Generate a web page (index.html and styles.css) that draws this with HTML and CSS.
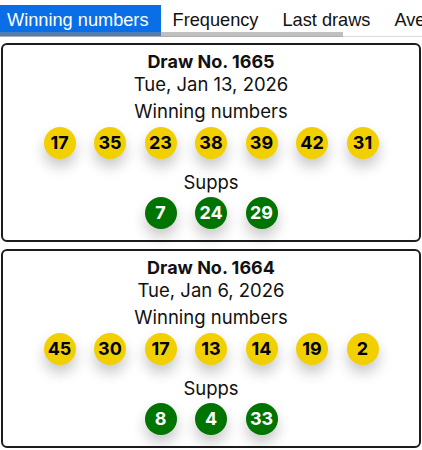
FILE: index.html
```html
<!DOCTYPE html>
<html lang="en">
<head>
  <meta charset="UTF-8" />
  <meta name="viewport" content="width=device-width, initial-scale=1.0"/>
  <title>Results</title>
  <link rel="stylesheet" href="styles.css">
</head>
<body>
  <nav class="tabs">
    <div class="tab active">Winning numbers</div>
    <div class="tab">Frequency</div>
    <div class="tab">Last draws</div>
    <div class="tab">Averages</div>
    <div class="scroll-track"><div class="scroll-thumb"></div></div>
  </nav>

  <div class="draw-card">
    <div class="draw-no">Draw No. 1665</div>
    <div class="draw-date">Tue, Jan 13, 2026</div>
    <div class="group-title">Winning numbers</div>
    <div class="balls">
      <span class="ball">17</span>
      <span class="ball">35</span>
      <span class="ball">23</span>
      <span class="ball">38</span>
      <span class="ball">39</span>
      <span class="ball">42</span>
      <span class="ball">31</span>
    </div>
    <div class="group-title">Supps</div>
    <div class="balls">
      <span class="ball supp">7</span>
      <span class="ball supp">24</span>
      <span class="ball supp">29</span>
    </div>
  </div>

  <div class="draw-card">
    <div class="draw-no">Draw No. 1664</div>
    <div class="draw-date">Tue, Jan 6, 2026</div>
    <div class="group-title">Winning numbers</div>
    <div class="balls">
      <span class="ball">45</span>
      <span class="ball">30</span>
      <span class="ball">17</span>
      <span class="ball">13</span>
      <span class="ball">14</span>
      <span class="ball">19</span>
      <span class="ball">2</span>
    </div>
    <div class="group-title">Supps</div>
    <div class="balls">
      <span class="ball supp">8</span>
      <span class="ball supp">4</span>
      <span class="ball supp">33</span>
    </div>
  </div>
</body>
</html>
```

FILE: styles.css
```css
body {
  margin: 0;
  font-family: Inter, "Noto Sans", sans-serif;
  color: #111;
  background: #fff;
  overflow: hidden;
}

.tabs {
  position: relative;
  display: flex;
  padding-top: 5px;
  height: 32px;
  white-space: nowrap;
  overflow: hidden;
  font-family: "Liberation Sans", Arial, sans-serif;
  font-size: 18.2px;
}

.tab {
  padding: 0 12px;
  line-height: 31px;
  color: #111;
}

.tab.active {
  padding-left: 7px;
  background: #0a6ee6;
  color: #fff;
}

/* fake horizontal scrollbar under the tab strip */
.scroll-track {
  position: absolute;
  left: 0;
  right: 0;
  bottom: 0;
  height: 5px;
  border-bottom: 1px solid #dcdcdc;
  box-sizing: border-box;
}

.scroll-thumb {
  width: 343px;
  height: 5px;
  background: rgba(140, 140, 140, 0.55);
}

.draw-card {
  margin: 6px 1px 0;
  border: 2px solid #1c1c1c;
  border-radius: 6px;
  padding: 7px 0 11px;
  text-align: center;
}

.draw-card + .draw-card {
  margin-top: 7px;
}

.draw-no {
  font-weight: 700;
  font-size: 18px;
  line-height: 20px;
}

.draw-date {
  font-size: 18.5px;
  line-height: 24px;
}

.group-title {
  font-size: 18.5px;
  line-height: 22px;
  margin-top: 4px;
}

.balls {
  display: flex;
  justify-content: center;
  gap: 18.5px;
  margin: 5px 0 12px;
}

.balls:last-child {
  margin: 4px 0 0;
}

.ball {
  width: 32px;
  height: 32px;
  border-radius: 50%;
  background: #f2d000;
  color: #000;
  font-weight: 700;
  font-size: 18px;
  line-height: 32px;
  box-shadow: 0 8px 14px rgba(0, 0, 0, 0.22);
}

.ball.supp {
  background: #007400;
  color: #fff;
}
```
